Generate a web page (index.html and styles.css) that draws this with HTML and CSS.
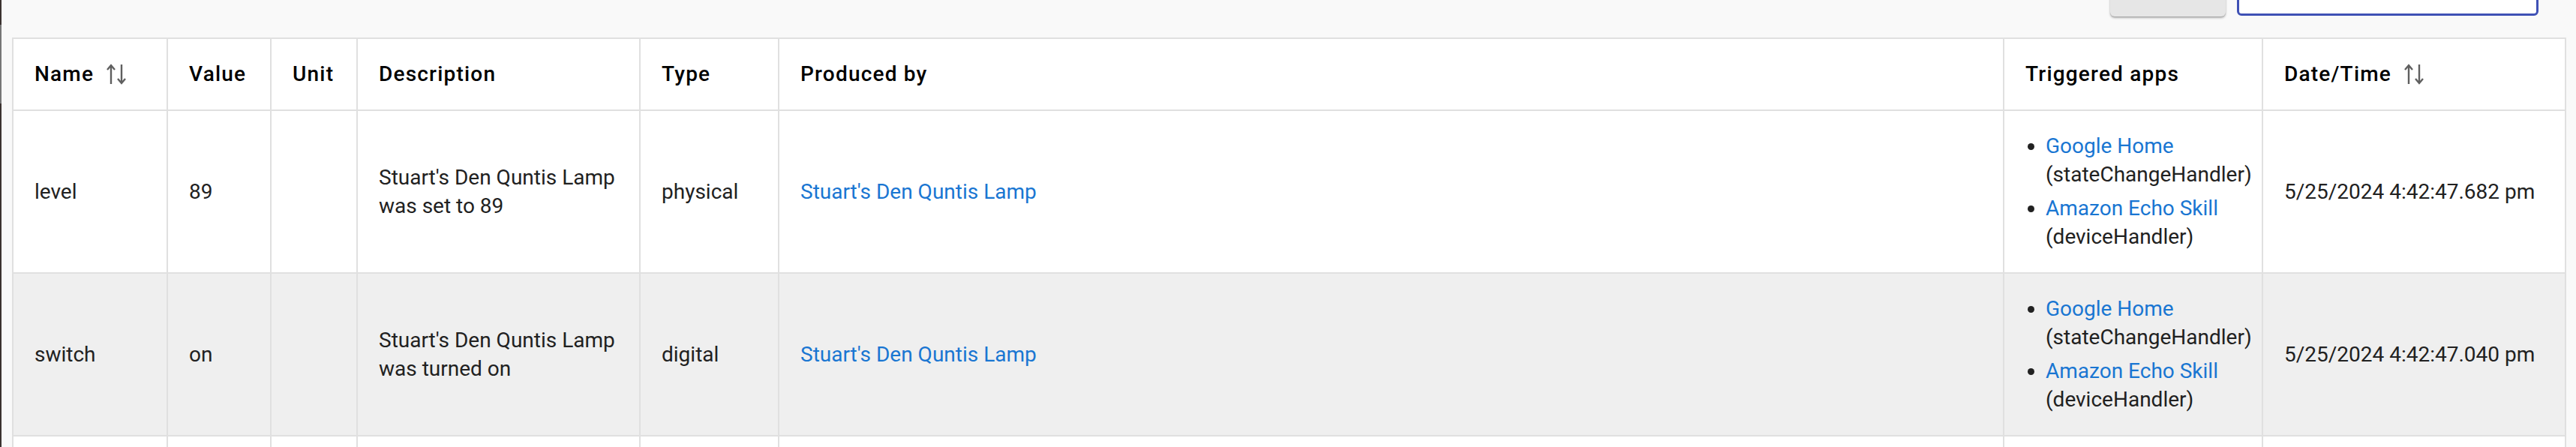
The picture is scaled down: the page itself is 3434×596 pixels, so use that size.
FILE: index.html
```html
<!DOCTYPE html>
<html lang="en">
<head>
<meta charset="utf-8">
<title>Events</title>
<link rel="stylesheet" href="styles.css">
</head>
<body>
<div class="frame">
  <div class="edge"><div class="edge-thumb"></div></div>
  <main class="main">
    <div class="toolbar">
      <button class="btn btn-raised" type="button"></button>
      <button class="btn btn-outlined" type="button"></button>
    </div>
    <table class="events">
      <colgroup>
        <col class="c-name"><col class="c-value"><col class="c-unit"><col class="c-desc">
        <col class="c-type"><col class="c-prod"><col class="c-trig"><col class="c-date">
      </colgroup>
      <thead>
        <tr>
          <th><span class="th-sort">Name <svg class="sort-icon" viewBox="0 0 26 28" aria-hidden="true"><path d="M6 27V2M1 8l5-6 5 6M20 1v25M15 20l5 6 5-6"/></svg></span></th>
          <th>Value</th>
          <th>Unit</th>
          <th>Description</th>
          <th>Type</th>
          <th>Produced by</th>
          <th>Triggered apps</th>
          <th><span class="th-sort">Date/Time <svg class="sort-icon" viewBox="0 0 26 28" aria-hidden="true"><path d="M6 27V2M1 8l5-6 5 6M20 1v25M15 20l5 6 5-6"/></svg></span></th>
        </tr>
      </thead>
      <tbody>
        <tr>
          <td>level</td>
          <td>89</td>
          <td></td>
          <td>Stuart's Den Quntis Lamp was set to 89</td>
          <td>physical</td>
          <td><a href="#">Stuart's Den Quntis Lamp</a></td>
          <td>
            <ul class="apps">
              <li><a href="#">Google Home</a><br>(stateChangeHandler)</li>
              <li><a href="#">Amazon Echo Skill</a><br>(deviceHandler)</li>
            </ul>
          </td>
          <td>5/25/2024 4:42:47.682 pm</td>
        </tr>
        <tr class="alt">
          <td>switch</td>
          <td>on</td>
          <td></td>
          <td>Stuart's Den Quntis Lamp was turned on</td>
          <td>digital</td>
          <td><a href="#">Stuart's Den Quntis Lamp</a></td>
          <td>
            <ul class="apps">
              <li><a href="#">Google Home</a><br>(stateChangeHandler)</li>
              <li><a href="#">Amazon Echo Skill</a><br>(deviceHandler)</li>
            </ul>
          </td>
          <td>5/25/2024 4:42:47.040 pm</td>
        </tr>
        <tr class="empty">
          <td></td><td></td><td></td><td></td><td></td><td></td><td></td><td></td>
        </tr>
      </tbody>
    </table>
  </main>
</div>
</body>
</html>
```
FILE: styles.css
```css
html, body {
  margin: 0;
  padding: 0;
  background: #f9f9f9;
  overflow: hidden;
}

body {
  font-family: Roboto, "Liberation Sans", sans-serif;
  color: #212121;
}

.frame {
  display: flex;
  min-height: 596px;
}

.edge {
  flex: 0 0 2px;
  background: #3b3230;
}

.edge-thumb {
  margin-top: 33px;
  height: 105px;
  background: #767676;
}

.main {
  flex: 1;
  padding: 0 13px 0 14px;
  min-width: 0;
}

.toolbar {
  display: flex;
  justify-content: flex-end;
  gap: 15px;
  padding-right: 37px;
  margin-top: -35px;
  height: 56px;
}

.btn {
  height: 56px;
  border-radius: 6px;
  padding: 0;
  font: inherit;
}

.btn-raised {
  width: 154px;
  border: none;
  background: #e6e6e6;
  box-shadow: 0 2px 3px rgba(0, 0, 0, 0.28), 0 1px 1px rgba(0, 0, 0, 0.12);
  margin-top: 1px;
}

.btn-outlined {
  width: 402px;
  background: #ffffff;
  border: 3px solid #3f51b5;
}

.events {
  margin-top: 29px;
  width: 3405px;
  table-layout: fixed;
  border-collapse: separate;
  border-spacing: 0;
  border-top: 2px solid #e0e0e0;
  border-left: 2px solid #e0e0e0;
  background: #ffffff;
  font-size: 28px;
  line-height: 38px;
}

.c-name { width: 206px; }
.c-value { width: 138px; }
.c-unit { width: 115px; }
.c-desc { width: 377px; }
.c-type { width: 185px; }
.c-prod { width: 1633px; }
.c-trig { width: 345px; }
.c-date { width: 404px; }

.events th,
.events td {
  border-right: 2px solid #e0e0e0;
  border-bottom: 2px solid #e0e0e0;
  padding: 0 28px;
  text-align: left;
  vertical-align: middle;
}

.events thead tr {
  height: 96px;
}

.events th {
  font-weight: 500;
  color: #000000;
  letter-spacing: 1.2px;
  white-space: nowrap;
}

.th-sort {
  display: inline-flex;
  align-items: center;
  gap: 17px;
}

.sort-icon {
  width: 26px;
  height: 28px;
  fill: none;
  stroke: #5f5f5f;
  stroke-width: 2.4;
}

.events tbody tr {
  height: 217px;
}

.events tbody td {
  padding-top: 28px;
  padding-bottom: 28px;
}

.events tr.alt td {
  background: #efefef;
}

.events a {
  color: #1976d2;
  text-decoration: none;
}

.apps {
  margin: 0;
  padding-left: 27px;
}

.apps li + li {
  margin-top: 7px;
}
```
